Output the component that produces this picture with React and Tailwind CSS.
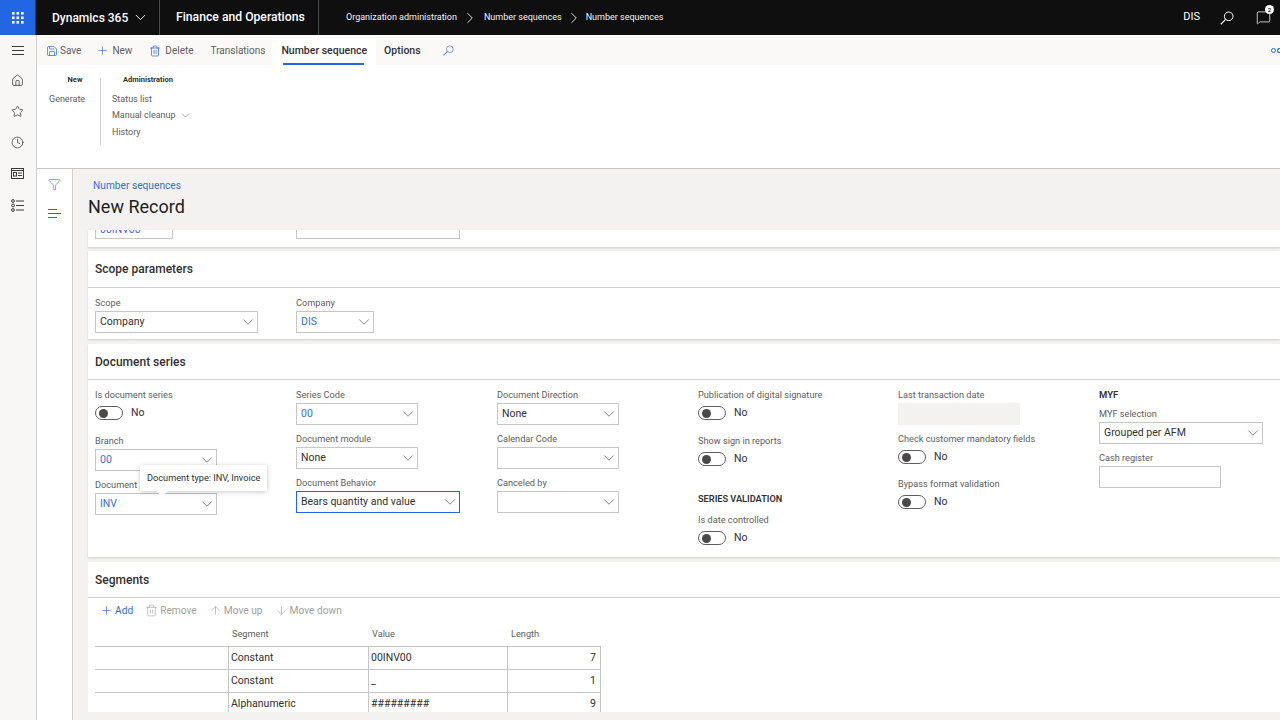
import { ChevronDown, ChevronRight, Clock, Filter, Home, ArrowDown, ArrowUp, Plus, Save, Star, Trash2, MessageSquare } from 'lucide-react';

function Waffle() {
  return (
    <svg width="12" height="12" viewBox="0 0 12 12" fill="#fff">
      {[0, 4.5, 9].map(y => [0, 4.5, 9].map(x => <rect key={`${x}-${y}`} x={x} y={y} width="2.6" height="2.6" />))}
    </svg>
  );
}

function Workspaces() {
  return (
    <svg width="13" height="11" viewBox="0 0 13 11" fill="none" stroke="#3b3a39" strokeWidth="1">
      <rect x="0.5" y="0.5" width="12" height="10" />
      <path d="M0.5 2.5h12" />
      <rect x="2.5" y="4.5" width="3" height="3.5" />
      <path d="M7 5h4M7 7.5h4" />
    </svg>
  );
}

function ModulesList() {
  return (
    <svg width="13" height="13" viewBox="0 0 13 13" fill="none" stroke="#3b3a39" strokeWidth="1">
      <circle cx="2" cy="2" r="1.4" />
      <circle cx="2" cy="6.5" r="1.4" />
      <circle cx="2" cy="11" r="1.4" />
      <path d="M5 2h8M5 6.5h8M5 11h8" />
    </svg>
  );
}

function Lines() {
  return (
    <svg width="13" height="9" viewBox="0 0 13 9" fill="none" stroke="#2266e3" strokeWidth="1">
      <path d="M0 .5h9M0 4.5h13M0 8.5h9" />
    </svg>
  );
}

function Magnifier({ className = '', size = 14 }) {
  return (
    <svg width={size} height={size} viewBox="0 0 14 14" fill="none" stroke="currentColor" strokeWidth="1" className={className}>
      <circle cx="8.7" cy="5.3" r="4.3" />
      <path d="M5.6 8.4 .8 13.2" strokeWidth="1.3" />
    </svg>
  );
}

function Toggle() {
  return (
    <div className="flex items-center h-[20px]">
      <div className="w-[28px] h-[14px] rounded-full border border-[#605e5c] flex items-center pl-[3px]">
        <div className="w-[9px] h-[9px] rounded-full bg-[#4a4947]" />
      </div>
      <span className="ml-[8px] text-[10.5px] text-[#323130]">No</span>
    </div>
  );
}

function Label({ children, className = '' }) {
  return <div className={`h-[16px] text-[9.2px] leading-[16px] text-[#605e5c] whitespace-nowrap ${className}`}>{children}</div>;
}

function Select({ value = '', link, focus, className = 'w-[122px]' }) {
  return (
    <div className={`h-[22px] flex items-center justify-between pl-[4px] bg-white border text-[10.5px] ${focus ? 'border-[#2266e3]' : 'border-[#c8c6c4]'} ${link ? 'text-[#3a6fd0]' : 'text-[#323130]'} ${className}`}>
      <span>{value}</span>
      <ChevronDown className="w-[18px] h-[18px] text-[#605e5c]" strokeWidth={1} />
    </div>
  );
}

function Field({ label, gap = 'mb-[6px]', children }) {
  return (
    <div className={gap}>
      <Label>{label}</Label>
      {children}
    </div>
  );
}

function SectionTitle({ children, className = 'h-[36px]' }) {
  return (
    <div className={`flex items-center pl-[7px] border-b border-[#d2d0ce] text-[12px] font-medium text-[#323130] ${className}`}>{children}</div>
  );
}

function ToolItem({ icon: Icon, children, color = 'text-[#605e5c]', iconColor = 'text-[#2266e3]' }) {
  return (
    <div className={`flex items-center gap-[2px] text-[10.2px] ${color}`}>
      <Icon className={`w-[13px] h-[13px] ${iconColor}`} strokeWidth={1.2} />
      <span>{children}</span>
    </div>
  );
}

const rows = [
  ['Constant', '00INV00', '7'],
  ['Constant', '_', '1'],
  ['Alphanumeric', '#########', '9'],
];

export default function App() {
  return (
    <div className="w-[1280px] h-[720px] overflow-hidden flex flex-col bg-[#f3f2f1] font-['Roboto',sans-serif]">
      {/* top bar */}
      <div className="h-[35px] shrink-0 bg-[#0f0f0f] flex items-center text-white">
        <div className="w-[36px] h-full bg-[#2266e3] flex items-center justify-center border-r border-[#3a3a3a]"><Waffle /></div>
        <div className="w-[124px] h-full flex items-center pl-[16px] border-r border-[#4a4a4a] text-[12px] font-medium whitespace-nowrap">
          Dynamics 365
          <ChevronDown className="w-[17px] h-[17px] ml-[4px]" strokeWidth={1.3} />
        </div>
        <div className="w-[159px] h-full flex items-center pl-[16px] border-r border-[#4a4a4a] text-[12.2px] font-medium whitespace-nowrap">Finance and Operations</div>
        <div className="flex items-center pl-[27px] text-[9px] text-[#f3f2f1] whitespace-nowrap">
          <span>Organization administration</span>
          <ChevronRight className="w-[18px] h-[18px] mx-[4.5px]" strokeWidth={1.2} />
          <span>Number sequences</span>
          <ChevronRight className="w-[18px] h-[18px] mx-[3px]" strokeWidth={1.2} />
          <span>Number sequences</span>
        </div>
        <div className="ml-auto flex items-center">
          <span className="text-[11px] mr-[20px]">DIS</span>
          <Magnifier className="mr-[22px]" size={14} />
          <div className="relative mr-[9px]">
            <MessageSquare className="w-[15px] h-[15px]" strokeWidth={1.2} />
            <div className="absolute -top-[5px] -right-[3px] w-[9px] h-[9px] rounded-full bg-white text-[#0f0f0f] text-[6px] leading-[9px] text-center font-semibold">2</div>
          </div>
        </div>
      </div>

      <div className="flex-1 flex min-h-0">
        {/* left rail */}
        <div className="w-[37px] shrink-0 bg-[#f8f7f6] border-r border-[#d2d0ce] flex flex-col items-center pt-[11px] pr-[1px]">
          <div className="flex flex-col gap-[3px] w-[12px] h-[28px]">
            <div className="h-px bg-[#3b3a39]" />
            <div className="h-px bg-[#3b3a39]" />
            <div className="h-px bg-[#3b3a39]" />
          </div>
          <Home className="w-[13px] h-[13px] text-[#3b3a39]" strokeWidth={1.4} />
          <Star className="w-[13px] h-[13px] mt-[18px] text-[#3b3a39]" strokeWidth={1.4} />
          <Clock className="w-[13px] h-[13px] mt-[18px] text-[#3b3a39]" strokeWidth={1.4} />
          <div className="mt-[18px] h-[13px] flex items-center"><Workspaces /></div>
          <div className="mt-[19px]"><ModulesList /></div>
        </div>

        <div className="flex-1 min-w-0 flex flex-col">
          {/* action pane */}
          <div className="h-[30px] shrink-0 bg-[#faf9f8] flex items-center pt-[1px] text-[10px] text-[#605e5c] relative">
            <div className="flex items-center gap-[2px] ml-[9px]"><Save className="w-[12px] h-[12px] text-[#2266e3]" strokeWidth={1.4} />Save</div>
            <div className="flex items-center gap-[3px] ml-[15px]"><Plus className="w-[13px] h-[13px] text-[#2266e3]" strokeWidth={1.1} />New</div>
            <div className="flex items-center gap-[4px] ml-[17px]"><Trash2 className="w-[12px] h-[12px] text-[#2266e3]" strokeWidth={1.4} />Delete</div>
            <div className="ml-[17px]">Translations</div>
            <div className="ml-[7px] h-full flex flex-col items-center justify-center relative text-[10.5px] font-medium text-[#323130] bg-white px-[9px]">
              Number sequence
              <div className="absolute bottom-0 left-[11px] right-[12px] h-[2px] bg-[#2266e3]" />
            </div>
            <div className="ml-[8px] text-[10.5px] font-medium text-[#323130]">Options</div>
            <Magnifier className="ml-[22px] text-[#5b83d6]" size={11} />
            <div className="absolute right-0 top-[13px] flex gap-[1px]">
              <div className="w-[5px] h-[5px] rounded-full border border-[#2266e3]" />
              <div className="w-[3px] h-[5px] rounded-l-full border border-r-0 border-[#2266e3]" />
            </div>
          </div>
          <div className="h-[104px] shrink-0 bg-white border-b border-[#c8c6c4] flex text-[9px] text-[#605e5c] pt-[9px]">
            <div className="w-[63px] pl-[12px]">
              <div className="h-[12px] text-center text-[7.5px] font-bold text-[#323130] leading-[12px] pl-[1px]">New</div>
              <div className="mt-[5px] leading-[16px] whitespace-nowrap">Generate</div>
            </div>
            <div className="w-px h-[67px] mt-[4px] bg-[#d2d0ce]" />
            <div className="pl-[11px]">
              <div className="h-[12px] pl-[11px] text-[7.5px] font-bold text-[#323130] leading-[12px]">Administration</div>
              <div className="mt-[5px] leading-[16px]">Status list</div>
              <div className="leading-[17px] flex items-center gap-[3px]">Manual cleanup <ChevronDown className="w-[13px] h-[13px]" strokeWidth={1} /></div>
              <div className="leading-[16px]">History</div>
            </div>
          </div>

          <div className="flex-1 min-h-0 flex">
            {/* page options rail */}
            <div className="w-[36px] shrink-0 bg-white border-r border-[#d2d0ce] flex flex-col items-center pt-[9px]">
              <Filter className="w-[13px] h-[13px] text-[#2266e3]" strokeWidth={1.1} />
              <div className="mt-[18px]"><Lines /></div>
            </div>

            <div className="flex-1 min-w-0 flex flex-col">
              {/* title */}
              <div className="h-[61px] shrink-0 pl-[15px]">
                <div className="pt-[9px] pl-[5px] text-[10.2px] leading-[16px] text-[#3a6fd0]">Number sequences</div>
                <div className="mt-[1px] text-[18px] leading-[24px] text-[#201f1e]">New Record</div>
              </div>

              {/* form */}
              <div className="flex-1 min-h-0 overflow-hidden pl-[15px] flex flex-col">
                <div className="h-[17px] shrink-0 bg-white shadow-[0_1px_2px_rgba(0,0,0,0.15)] overflow-hidden relative pl-[7px]">
                  <div className="absolute left-[7px] top-0 w-[78px] h-[9px] border border-t-0 border-[#c8c6c4] overflow-hidden text-[10.5px] text-[#3a6fd0] pl-[4px] leading-[0px]">00INV00</div>
                  <div className="absolute left-[208px] top-0 w-[164px] h-[9px] border border-t-0 border-[#c8c6c4]" />
                </div>

                <div className="h-[88px] shrink-0 mt-[4px] bg-white shadow-[0_1px_2px_rgba(0,0,0,0.15)]">
                  <SectionTitle className="h-[37px]">Scope parameters</SectionTitle>
                  <div className="flex pl-[7px] pt-[7px]">
                    <div className="w-[201px]">
                      <Label>Scope</Label>
                      <Select value="Company" className="w-[163px]" />
                    </div>
                    <div>
                      <Label>Company</Label>
                      <Select value="DIS" link className="w-[78px]" />
                    </div>
                  </div>
                </div>

                <div className="h-[213px] shrink-0 mt-[5px] bg-white shadow-[0_1px_2px_rgba(0,0,0,0.15)] relative">
                  <SectionTitle>Document series</SectionTitle>
                  <div className="grid grid-cols-[201px_201px_201px_200px_201px_1fr] pl-[7px] pt-[7px]">
                    <div>
                      <Field label="Is document series" gap="mb-[10px]"><Toggle /></Field>
                      <Field label="Branch"><Select value="00" link /></Field>
                      <Field label="Document"><Select value="INV" link /></Field>
                    </div>
                    <div>
                      <Field label="Series Code"><Select value="00" link /></Field>
                      <Field label="Document module"><Select value="None" /></Field>
                      <Field label="Document Behavior"><Select value="Bears quantity and value" focus className="w-[164px]" /></Field>
                    </div>
                    <div>
                      <Field label="Document Direction"><Select value="None" /></Field>
                      <Field label="Calendar Code"><Select /></Field>
                      <Field label="Canceled by"><Select /></Field>
                    </div>
                    <div>
                      <Field label="Publication of digital signature" gap="mb-[10px]"><Toggle /></Field>
                      <Field label="Show sign in reports" gap="mb-[22px]"><Toggle /></Field>
                      <div className="h-[16px] text-[9.2px] leading-[16px] font-semibold text-[#323130]">SERIES VALIDATION</div>
                      <div className="mt-[5px]">
                        <Label>Is date controlled</Label>
                        <Toggle />
                      </div>
                    </div>
                    <div>
                      <Field label="Last transaction date"><div className="h-[22px] w-[122px] bg-[#f3f2f1]" /></Field>
                      <Field label="Check customer mandatory fields" gap="mb-[9px]"><Toggle /></Field>
                      <Field label="Bypass format validation"><Toggle /></Field>
                    </div>
                    <div>
                      <div className="h-[16px] text-[9.5px] leading-[16px] font-semibold text-[#323130]">MYF</div>
                      <div className="mt-[3px]">
                        <Label>MYF selection</Label>
                        <Select value="Grouped per AFM" className="w-[164px]" />
                      </div>
                      <div className="mt-[6px]">
                        <Label>Cash register</Label>
                        <div className="w-[122px] h-[22px] border border-[#c8c6c4]" />
                      </div>
                    </div>
                  </div>
                  {/* tooltip */}
                  <div className="absolute left-[52px] top-[121px] h-[26px] px-[7px] bg-white shadow-[0_1px_5px_rgba(0,0,0,0.22)] flex items-center text-[9.2px] text-[#323130] whitespace-nowrap">
                    Document type: INV, Invoice
                    <div className="absolute left-[18px] -bottom-[4px] w-[8px] h-[8px] bg-white rotate-45" />
                  </div>
                </div>

                <div className="flex-1 min-h-0 mt-[5px] mb-[8px] bg-white overflow-hidden">
                  <SectionTitle>Segments</SectionTitle>
                  <div className="flex items-center gap-[12px] h-[26px] pl-[12px]">
                    <ToolItem icon={Plus} color="text-[#3a6fd0]">Add</ToolItem>
                    <ToolItem icon={Trash2} color="text-[#a19f9d]" iconColor="text-[#a19f9d]">Remove</ToolItem>
                    <ToolItem icon={ArrowUp} color="text-[#a19f9d]" iconColor="text-[#a19f9d]">Move up</ToolItem>
                    <ToolItem icon={ArrowDown} color="text-[#a19f9d]" iconColor="text-[#a19f9d]">Move down</ToolItem>
                  </div>
                  <div className="ml-[7px] w-[506px] text-[#323130]">
                    <div className="grid grid-cols-[133px_140px_139px_1fr] h-[22px] items-center pb-[2px] text-[9.2px] text-[#605e5c]">
                      <div />
                      <div className="pl-[4px]">Segment</div>
                      <div className="pl-[4px]">Value</div>
                      <div className="pl-[4px]">Length</div>
                    </div>
                    <div className="border-t border-r border-[#c8c6c4]">
                      {rows.map(([segment, value, length], i) => (
                        <div key={i} className="grid grid-cols-[133px_140px_139px_1fr] h-[23px] border-b border-[#c8c6c4] items-center text-[10.5px]">
                          <div />
                          <div className="pl-[2px] h-full flex items-center border-l border-[#c8c6c4]">{segment}</div>
                          <div className="pl-[2px] h-full flex items-center border-l border-[#c8c6c4]">{value}</div>
                          <div className="pr-[4px] h-full flex items-center justify-end border-l border-[#c8c6c4]">{length}</div>
                        </div>
                      ))}
                    </div>
                  </div>
                </div>
              </div>
            </div>
          </div>
        </div>
      </div>
    </div>
  );
}
